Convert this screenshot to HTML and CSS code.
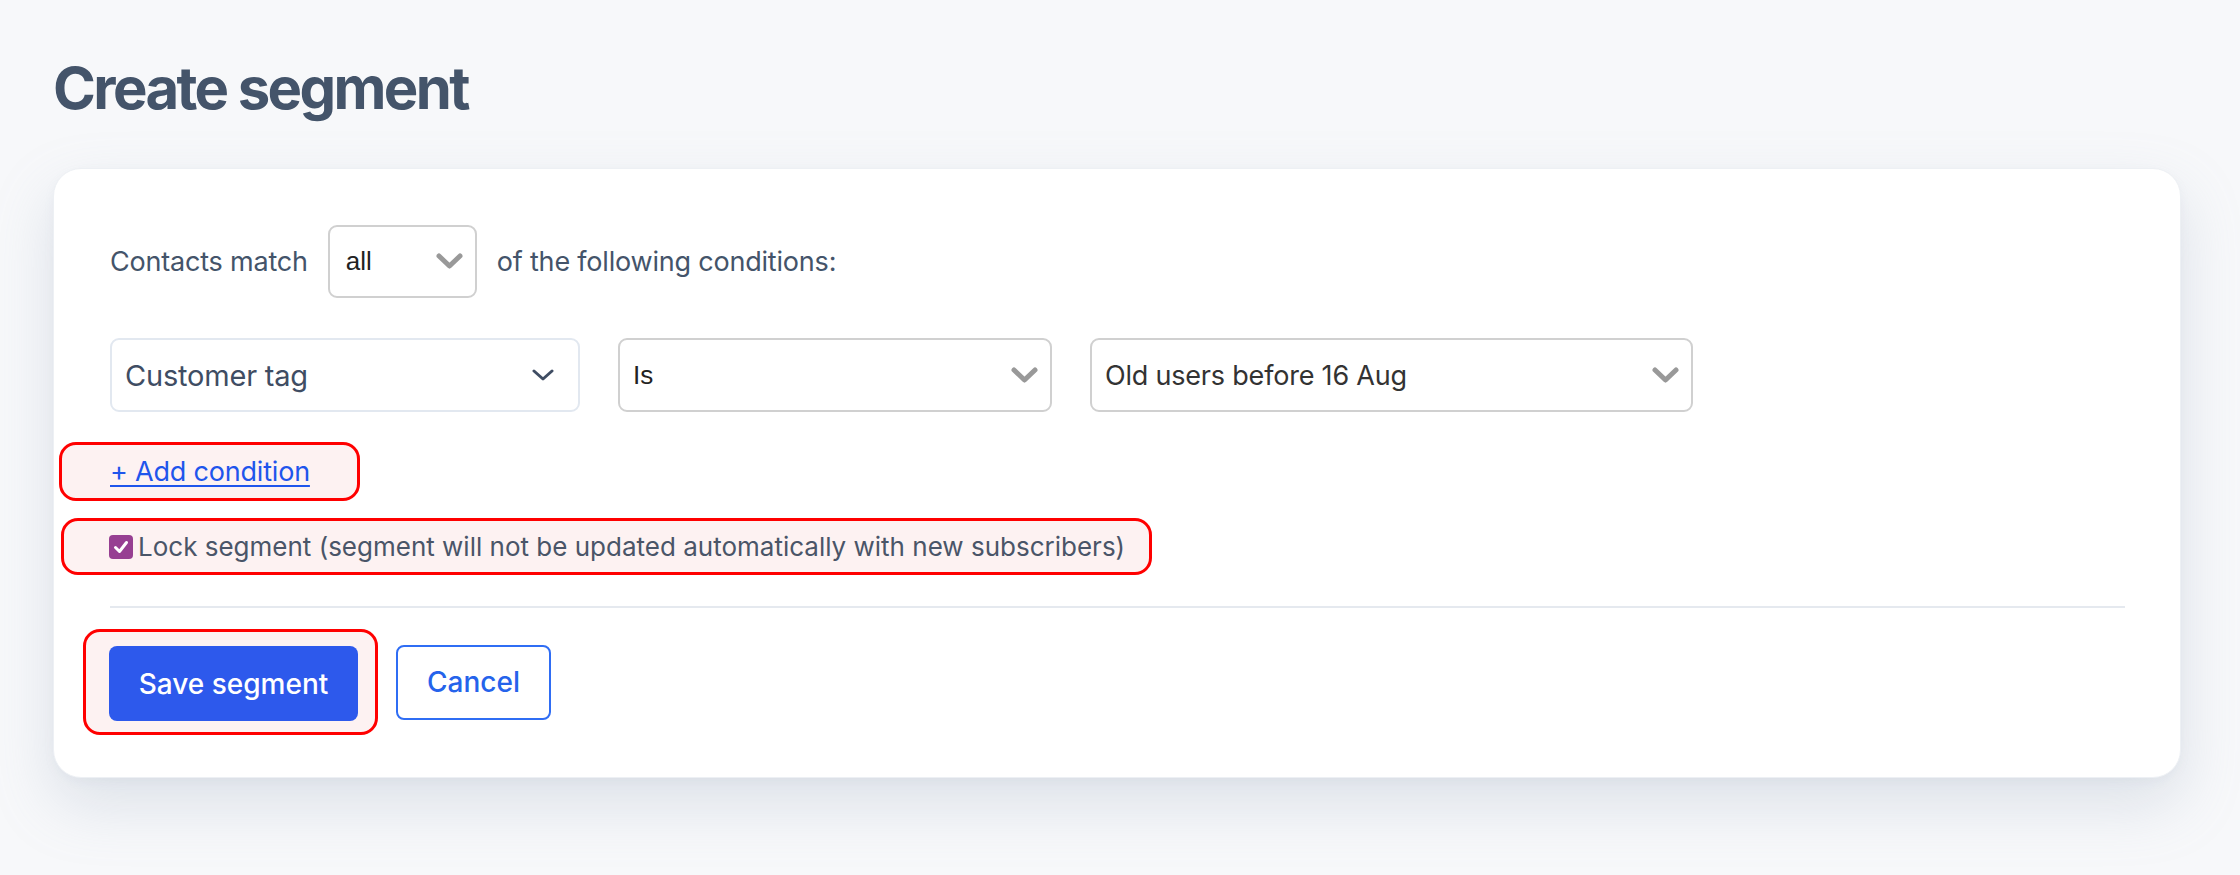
FILE: index.html
```html
<!DOCTYPE html>
<html lang="en">
  <head>
    <meta charset="UTF-8" />
    <meta name="viewport" content="width=device-width, initial-scale=1.0" />
    <title>Create segment</title>
    <link rel="stylesheet" href="styles.css">
  </head>
  <body>
    <div id="page">
      <h1 class="page-title">Create segment</h1>

      <div class="card">
        <div class="match-row">
          <span>Contacts match</span>
          <div class="select select-small">
            <span class="select-value system">all</span>
            <svg class="chevron-bold" width="27" height="17" viewBox="0 0 27 17">
              <path d="M3 3 L13.5 13 L24 3" />
            </svg>
          </div>
          <span>of the following conditions:</span>
        </div>

        <div class="condition-row">
          <div class="select select-field">
            <span class="select-value large">Customer tag</span>
            <svg class="chevron-thin" width="22" height="12" viewBox="0 0 22 12">
              <path d="M2 2 L11 10 L20 2" />
            </svg>
          </div>
          <div class="select select-operator">
            <span class="select-value system">Is</span>
            <svg class="chevron-bold" width="27" height="17" viewBox="0 0 27 17">
              <path d="M3 3 L13.5 13 L24 3" />
            </svg>
          </div>
          <div class="select select-tag">
            <span class="select-value dark">Old users before 16 Aug</span>
            <svg class="chevron-bold" width="27" height="17" viewBox="0 0 27 17">
              <path d="M3 3 L13.5 13 L24 3" />
            </svg>
          </div>
        </div>

        <div class="highlight add-wrap">
          <a href="#" class="add-condition">+ Add condition</a>
        </div>

        <div class="highlight lock-wrap">
          <label class="lock">
            <span class="checkbox">
              <svg width="18" height="18" viewBox="0 0 18 18">
                <path d="M3.5 9.5 L7.5 13.5 L14.5 4.5" />
              </svg>
            </span>
            Lock segment (segment will not be updated automatically with new subscribers)
          </label>
        </div>

        <hr class="divider" />

        <div class="actions">
          <div class="highlight save-wrap">
            <button class="btn btn-primary">Save segment</button>
          </div>
          <button class="btn btn-outline">Cancel</button>
        </div>
      </div>
    </div>
  </body>
</html>
```

FILE: styles.css
```css
html {
  box-sizing: border-box;
  background-color: #f7f8fa;
}
*,
*:before,
*:after {
  box-sizing: inherit;
}
body {
  margin: 0;
  padding: 0;
  background-color: #f7f8fa;
  font-family: Inter, "Noto Sans", sans-serif;
  color: #44546a;
}
#page {
  padding: 50px 59px 90px 53px;
}
.page-title {
  margin: 0 0 42px;
  font-size: 58px;
  line-height: 76px;
  font-weight: 700;
  letter-spacing: -2.6px;
  color: #44546a;
}
.card {
  background-color: white;
  border: 1px solid #edf0f4;
  border-radius: 28px;
  padding: 56px 55px 42px 56px;
  box-shadow: 0 26px 60px rgba(148, 163, 184, 0.26),
    0 4px 10px rgba(148, 163, 184, 0.08);
}
.match-row {
  display: flex;
  align-items: center;
  gap: 20px;
  font-size: 27px;
  letter-spacing: -0.2px;
}
.select {
  display: flex;
  align-items: center;
  justify-content: space-between;
  height: 74px;
  border: 2px solid #d0d0d0;
  border-radius: 9px;
  background-color: white;
  padding: 0 12px 0 13px;
}
.select-small {
  width: 149px;
  height: 73px;
  padding-left: 16px;
}
.select-value {
  font-size: 27px;
  letter-spacing: -0.2px;
  color: #3f4d63;
}
.select-value.large {
  font-size: 29px;
}
.select-value.system {
  font-family: "Liberation Sans", Arial, sans-serif;
  font-size: 26px;
  letter-spacing: 0;
  color: #222;
}
.select-value.dark {
  color: #333;
}
.chevron-bold path {
  fill: none;
  stroke: #999;
  stroke-width: 5;
  stroke-linecap: round;
  stroke-linejoin: round;
}
.chevron-thin path {
  fill: none;
  stroke: #3f4d63;
  stroke-width: 3;
  stroke-linecap: round;
  stroke-linejoin: round;
}
.condition-row {
  display: flex;
  gap: 38px;
  margin-top: 40px;
}
.select-field {
  width: 470px;
  border-color: #e2e8f0;
  padding-right: 24px;
}
.select-operator {
  width: 434px;
}
.select-tag {
  width: 603px;
}
.highlight {
  border: 3px solid #ff0000;
  border-radius: 17px;
  background-color: #fdf2f2;
}
.add-wrap {
  display: inline-block;
  margin: 30px 0 0 -51px;
  padding: 10px 47px 10px 48px;
}
.add-condition {
  font-size: 27px;
  line-height: 33px;
  letter-spacing: -0.2px;
  color: #1f55ec;
  text-decoration: underline;
  text-underline-offset: 4px;
  text-decoration-thickness: 2px;
}
.lock-wrap {
  display: table;
  margin: 17px 0 0 -49px;
  padding: 9px 24px 9px 45px;
}
.lock {
  display: flex;
  align-items: center;
  gap: 5px;
  font-size: 26px;
  line-height: 33px;
  color: #4a5568;
}
.checkbox {
  display: flex;
  align-items: center;
  justify-content: center;
  width: 24px;
  height: 24px;
  border-radius: 4px;
  background-color: #973f92;
}
.checkbox path {
  fill: none;
  stroke: white;
  stroke-width: 3;
  stroke-linecap: round;
  stroke-linejoin: round;
}
.divider {
  border: none;
  border-top: 2px solid #e5e9ef;
  margin: 31px 0 21px;
}
.actions {
  display: flex;
  align-items: center;
  gap: 18px;
  margin-left: -27px;
}
.save-wrap {
  padding: 14px 17px 11px 23px;
}
.btn {
  height: 75px;
  border-radius: 8px;
  font-family: Inter, "Noto Sans", sans-serif;
  font-size: 28px;
  font-weight: 500;
  cursor: pointer;
}
.btn-primary {
  width: 249px;
  border: none;
  background-color: #2d59ec;
  color: white;
}
.btn-outline {
  width: 155px;
  border: 2px solid #2f6df4;
  background-color: white;
  color: #2563eb;
}
```
